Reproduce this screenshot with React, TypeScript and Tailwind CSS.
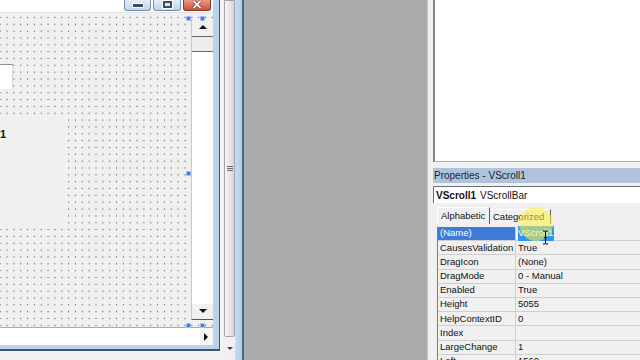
import React from 'react';

const rows: [string, string][] = [
  ['(Name)', 'VScroll1'],
  ['CausesValidation', 'True'],
  ['DragIcon', '(None)'],
  ['DragMode', '0 - Manual'],
  ['Enabled', 'True'],
  ['Height', '5055'],
  ['HelpContextID', '0'],
  ['Index', ''],
  ['LargeChange', '1'],
  ['Left', '1560'],
];

const Tri = ({ dir, className = '' }: { dir: 'up' | 'down' | 'right'; className?: string }) => {
  const pts = dir === 'up' ? '0,5 4,1 8,5' : dir === 'down' ? '0,1 8,1 4,5' : '1,0 5,4 1,8';
  return (
    <svg width="8" height="8" viewBox="0 0 8 8" className={className}>
      <polygon points={pts} fill="#111" />
    </svg>
  );
};

const Handle = ({ x, y }: { x: number; y: number }) => (
  <div
    className="absolute w-[5px] h-[5px] bg-[#3f7fd8] border border-[#9cc2f0]"
    style={{ left: x, top: y }}
  />
);

function TitleButtons() {
  return (
    <div className="h-[12px] shrink-0 bg-white flex justify-end items-start pr-[2px] gap-[2px]">
      <div className="w-[27px] h-[11px] rounded-b-[3px] border border-t-0 border-[#7590b5] bg-linear-to-b from-[#e4edf7] to-[#c3d4e9] flex items-end justify-center pb-[2px]">
        <div className="w-[10px] h-[3px] bg-[#3b4c63] border border-white box-content" />
      </div>
      <div className="w-[28px] h-[11px] rounded-b-[3px] border border-t-0 border-[#7590b5] bg-linear-to-b from-[#e4edf7] to-[#c3d4e9] flex items-start justify-center pt-[1px]">
        <div className="w-[9px] h-[7px] border-2 border-[#3b4c63] outline outline-white" />
      </div>
      <div className="w-[28px] h-[11px] rounded-b-[3px] border border-t-0 border-[#8a3528] bg-linear-to-b from-[#e79a86] to-[#c9503b] flex items-start justify-center">
        <svg width="12" height="10" viewBox="0 0 12 10">
          <path d="M2.5 1 L9.5 8 M9.5 1 L2.5 8" stroke="#5a1d14" strokeWidth="3" />
          <path d="M2.5 1 L9.5 8 M9.5 1 L2.5 8" stroke="#fff" strokeWidth="1.8" />
        </svg>
      </div>
    </div>
  );
}

function FormDesigner() {
  return (
    <div className="flex shrink-0 w-[244px] h-full bg-[#f4f4f4]">
      <div className="flex flex-col w-[223px]">
        <div className="w-[220px] shrink-0 bg-[#3a5877] pr-px pb-[2px]">
          <div className="bg-[#bcd3ec] pr-[6px] pb-[4px]">
            <div className="w-[213px] flex flex-col bg-white">
              <TitleButtons />
              <div className="relative h-[315px] shrink-0 flex bg-[#f0f0f0] bg-[radial-gradient(circle,#5a5a5a_0.7px,transparent_1px)] bg-[length:6.85px_6.85px] bg-[position:3.6px_1px] border-t border-[#e2e2e2]">
                <div className="relative w-[191px]">
                  <div className="absolute left-0 top-[51px] w-[13px] h-[25px] bg-white border-t border-[#8c8c8c] border-r border-r-[#d8d8d8]" />
                  <div className="absolute left-0 top-[106px] w-[68px] h-[106px] bg-[#f0f0f0]">
                    <div className="mt-[9px] text-[11px] font-bold leading-[12px] text-[#111]">1</div>
                  </div>
                </div>
                <div className="w-[22px] pt-[6px] pb-[7px]">
                  <div className="h-full flex flex-col border-l border-[#c8c8c8] border-b border-b-[#555]">
                    <div className="h-[18px] shrink-0 bg-[#f0f0f0] flex items-center justify-center border-b border-[#6a6a6a]">
                      <Tri dir="up" />
                    </div>
                    <div className="h-[15px] shrink-0 bg-[#ececec] border-b border-[#6a6a6a]" />
                    <div className="flex-1 bg-white" />
                    <div className="h-[15px] shrink-0 bg-[#f0f0f0] flex items-center justify-center">
                      <Tri dir="down" />
                    </div>
                  </div>
                </div>
                <Handle x={186} y={3} />
                <Handle x={200} y={3} />
                <Handle x={186} y={158} />
                <Handle x={186} y={310} />
                <Handle x={200} y={310} />
              </div>
              <div className="h-[18px] shrink-0 border-t border-[#a9a9a9] bg-white flex justify-end">
                <div className="w-[13px] bg-[#f6f6f6] flex items-center justify-center">
                  <Tri dir="right" />
                </div>
              </div>
            </div>
          </div>
        </div>
        <div className="flex-1 bg-[#f2f2f2]" />
      </div>
      <div className="w-[12px] flex flex-col bg-[#f0f0f0] pl-px">
        <div className="flex-1 border border-[#a4a4a4] rounded-b-[2px] bg-linear-to-r from-[#f6f6f6] to-[#d6d6d6] flex flex-col items-center justify-center gap-px">
          <div className="w-[6px] h-px bg-[#6c6c6c]" />
          <div className="w-[6px] h-px bg-[#6c6c6c]" />
          <div className="w-[6px] h-px bg-[#6c6c6c]" />
        </div>
        <div className="h-[23px] shrink-0 flex items-center justify-center">
          <svg width="6" height="4" viewBox="0 0 6 4">
            <polygon points="0,0 6,0 3,3" fill="#444" />
          </svg>
        </div>
      </div>
      <div className="w-[7px] bg-linear-to-r from-[#c9dcf1] to-[#b3cce8]" />
      <div className="w-[2px] bg-[#4a6782]" />
    </div>
  );
}

function Properties() {
  return (
    <div className="relative shrink-0 w-[213px] h-full overflow-hidden bg-[#f0f0f0] border-l border-[#c9c9c9] pl-[5px] flex flex-col font-['Liberation_Sans',Arial,sans-serif] text-[#111]">
      <div className="h-[162px] shrink-0 bg-white border-l-2 border-[#848484] border-b border-b-[#b0b0b0]" />
      <div className="mt-[6px] shrink-0 h-[15px] bg-[#afc3dc] text-[10px] leading-[15px] pl-px text-[#14243a]">
        Properties - VScroll1
      </div>
      <div className="mt-[3px] shrink-0 h-[17px] bg-white border-t border-l border-[#707070] flex items-center gap-[4px] pl-[2px] text-[10px]">
        <span className="font-bold">VScroll1</span>
        <span>VScrollBar</span>
      </div>
      <div className="mt-[4px] shrink-0 h-[17px] flex items-end pl-[4px] text-[9.5px]">
        <div className="w-[53px] h-[17px] border-l border-t border-white border-r border-r-[#5e5e5e] flex items-center pl-[3px]">
          Alphabetic
        </div>
        <div className="w-[61px] h-[15px] border-t border-white border-r border-r-[#5e5e5e] flex items-center pl-[3px]">
          Categorized
        </div>
      </div>
      <div className="mt-[3px] ml-[4px] shrink-0 flex flex-col border-l border-[#7d7d7d] text-[9.5px]">
        {rows.map(([name, value], i) => (
          <div key={name} className="h-[14.2px] shrink-0 flex border-b border-[#cfcfcf]">
            <div
              className={
                'w-[78px] border-r border-[#cfcfcf] pl-[2px] flex items-center whitespace-nowrap overflow-hidden ' +
                (i === 0 ? 'bg-[#3d7bd6] text-white' : '')
              }
            >
              {name}
            </div>
            <div className="flex-1 pl-[2px] flex items-center whitespace-nowrap">
              {i === 0 ? <span className="bg-[#3394f6] text-white pr-px">{value}</span> : value}
            </div>
          </div>
        ))}
      </div>
      <div className="absolute left-[91px] top-[207px] w-[34px] h-[34px] rounded-full bg-[#fff23c]/55" />
      <svg className="absolute left-[114px] top-[230px]" width="7" height="15" viewBox="0 0 7 15">
        <path d="M1 1 H3 L3.5 1.6 L4 1 H6 M3.5 1.6 V13.4 M1 14 H3 L3.5 13.4 L4 14 H6 M2 7.5 H5" stroke="#000" strokeWidth="1" fill="none" />
      </svg>
    </div>
  );
}

export default function App() {
  return (
    <div className="flex w-[640px] h-[360px] overflow-hidden bg-[#ababab] font-['Liberation_Sans',Arial,sans-serif]">
      <FormDesigner />
      <div className="w-[183px] shrink-0 h-full bg-[#ababab]" />
      <Properties />
    </div>
  );
}
